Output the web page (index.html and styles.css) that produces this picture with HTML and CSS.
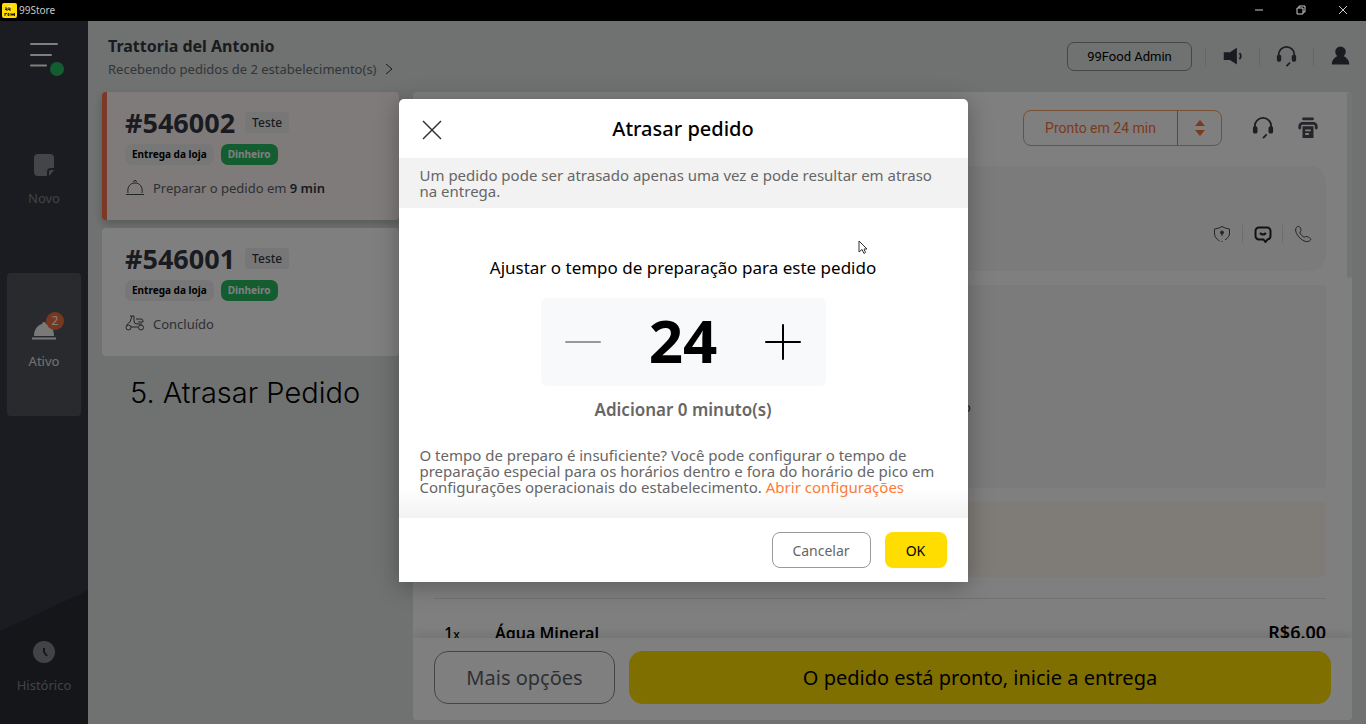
FILE: index.html
```html
<!DOCTYPE html>
<html lang="pt-BR">
  <head>
    <meta charset="UTF-8" />
    <meta name="viewport" content="width=device-width, initial-scale=1.0" />
    <title>99Store</title>
    <link rel="stylesheet" href="styles.css" />
  </head>
  <body>
    <header class="titlebar">
      <svg class="app-logo" viewBox="0 0 15 15">
        <rect width="15" height="15" rx="2" fill="#fd0" />
        <path d="M3 5h2v3M6 5h2v3M3 6.500h2M6 6.500h2M3 10v3M3 10.500h2M6 10.500h1v2H6zM9 10v3M9 11.500h4M11 10v3M12.500 10v3" fill="none" stroke="#222" stroke-width="1" />
        <path d="M6 3.500q3 1 4-1" fill="none" stroke="#fff3a0" />
      </svg>
      <span class="app-name">99Store</span>
      <button class="win-btn" aria-label="Minimizar">
        <svg viewBox="0 0 10 10"><path d="M1 5h8" /></svg>
      </button>
      <button class="win-btn" aria-label="Restaurar">
        <svg viewBox="0 0 10 10"><path d="M1 3h6v6H1zM3 3V1h6v6H7" /></svg>
      </button>
      <button class="win-btn" aria-label="Fechar">
        <svg viewBox="0 0 10 10"><path d="M1 1l8 8M9 1L1 9" /></svg>
      </button>
    </header>

    <div class="app">
      <nav class="sidebar">
        <button class="menu-btn" aria-label="Menu">
          <svg viewBox="0 0 36 36">
            <path d="M1 3h26M1 14h20M1 24.500h15" stroke="#fff" stroke-width="2" stroke-linecap="round" />
            <circle cx="27" cy="28" r="7" fill="#26bb63" />
          </svg>
        </button>
        <a href="#" class="nav-item">
          <svg class="nav-icon" viewBox="0 0 32 32">
            <path d="M10 5h12a4 4 0 0 1 4 4v10h-3a4 4 0 0 0-4 4v4h-9a4 4 0 0 1-4-4V9a4 4 0 0 1 4-4z" fill="#888b91" />
            <path d="M26 21l-5 6v-4a2 2 0 0 1 2-2z" fill="#888b91" />
          </svg>
          <span>Novo</span>
        </a>
        <a href="#" class="nav-item active">
          <svg class="nav-icon" viewBox="0 0 32 32">
            <path d="M6 24c0-7 4-11 8-12a2 2 0 0 1 4 0c5 1 8 5 8 12z" fill="#f2f2f2" />
            <path d="M4 26.500h24" stroke="#f2f2f2" stroke-width="2" />
          </svg>
          <span class="nav-badge">2</span>
          <span>Ativo</span>
        </a>
        <a href="#" class="nav-item last">
          <svg class="nav-icon" viewBox="0 0 32 32">
            <circle cx="16" cy="16" r="11" fill="#84868b" />
            <path d="M16 12v4l3 4" fill="none" stroke="#2b2e34" stroke-width="2" />
          </svg>
          <span>Histórico</span>
        </a>
      </nav>

      <main class="main">
        <header class="topbar">
          <div class="store">
            <h1>Trattoria del Antonio</h1>
            <a href="#">
              Recebendo pedidos de 2 estabelecimento(s)
              <svg viewBox="0 0 8 14"><path d="M1 2l6 5-6 5" /></svg>
            </a>
          </div>
          <button class="admin-btn">99Food Admin</button>
          <button class="icon-btn" aria-label="Avisos">
            <svg viewBox="0 0 24 24">
              <path d="M2 7h7l8-5v19l-8-5H2z" fill="#333740" />
              <path d="M20 8q3 3.500 0 7" fill="none" stroke="#333740" stroke-width="2" />
            </svg>
          </button>
          <button class="icon-btn" aria-label="Suporte">
            <svg viewBox="0 0 24 24"><use href="#headset" /></svg>
          </button>
          <button class="icon-btn" aria-label="Conta">
            <svg viewBox="0 0 24 24">
              <circle cx="12" cy="6.500" r="6" fill="#333740" />
              <path d="M2 21c0-5 3-8 7-10h6c4 2 7 5 7 10z" fill="#333740" />
            </svg>
          </button>
        </header>

        <div class="content">
          <section class="orders">
            <article class="order selected">
              <div class="order-head">
                <h2>#546002</h2>
                <span class="tag">Teste</span>
              </div>
              <div class="chips">
                <span class="chip">Entrega da loja</span>
                <span class="chip paid">Dinheiro</span>
              </div>
              <p class="status">
                <svg viewBox="0 0 20 20"><path d="M1 16.500h18M3 15c-1-6 2-10 7-10s8 4 7 10M8.500 4a1.500 1.500 0 1 1 3 0" /></svg>
                <span>Preparar o pedido em <b>9 min</b></span>
              </p>
            </article>
            <article class="order">
              <div class="order-head">
                <h2>#546001</h2>
                <span class="tag">Teste</span>
              </div>
              <div class="chips">
                <span class="chip">Entrega da loja</span>
                <span class="chip paid">Dinheiro</span>
              </div>
              <p class="status">
                <svg viewBox="0 0 20 20">
                  <path d="M5 2h4v5q0 3 3 3h5M7 2L5 8C3 9 2 10 2 12M11 5h5a2 2 0 0 1 2 2v1h-5M6 13h7" />
                  <circle cx="3.500" cy="13.500" r="2.500" />
                  <circle cx="16" cy="13.500" r="2.500" />
                </svg>
                <span>Concluído</span>
              </p>
            </article>
            <p class="caption">5. Atrasar Pedido</p>
          </section>

          <section class="detail">
            <div class="detail-scroll">
              <div class="toolbar">
                <button class="ready-btn">
                  <span class="ready-label">Pronto em 24 min</span>
                  <span class="ready-arrows">
                    <svg viewBox="0 0 10 18"><path d="M5 1l5 6H0zM5 17l5-6H0z" /></svg>
                  </span>
                </button>
                <button class="tool-btn" aria-label="Suporte">
                  <svg viewBox="0 0 24 24"><use href="#headset" /></svg>
                </button>
                <button class="tool-btn" aria-label="Imprimir">
                  <svg viewBox="0 0 24 24">
                    <path d="M7 2h10M3 12v-2a3 3 0 0 1 3-3h12a3 3 0 0 1 3 3v2" fill="none" stroke="#484c54" stroke-width="3" stroke-linecap="round" />
                    <path d="M6 10h12v13H6z" fill="#484c54" />
                    <path d="M9 14.500h6M9 18.500h4" stroke="#fff" stroke-width="2" />
                  </svg>
                </button>
              </div>
              <div class="box customer">
                <button class="contact-btn" aria-label="Segurança">
                  <svg viewBox="0 0 18 18">
                    <path d="M12 15c3-2 4.500-4 4.500-7V4Q12 3.500 9 1.500 6 3.500 1.500 4v4c0 4 2 6 5 8M8.500 16.500h1" />
                    <circle cx="9" cy="7.500" r="1.500" fill="#44484f" />
                    <path d="M9 8v3" />
                  </svg>
                </button>
                <button class="contact-btn chat" aria-label="Mensagem">
                  <svg viewBox="0 0 18 18"><path d="M5 2.500h8a3.500 3.500 0 0 1 3.500 3.500v5a3.500 3.500 0 0 1-3 3.500L11.500 17l-2-2.500H5A3.500 3.500 0 0 1 1.500 11V6A3.500 3.500 0 0 1 5 2.500zM6 8q3 3 6 0" /></svg>
                </button>
                <button class="contact-btn" aria-label="Telefone">
                  <svg viewBox="0 0 18 18"><path d="M3.500 1.500C6 .500 7 4 7 5.500c0 1-1.500 1-1 2.500 1 2 2 3 4 4 1.500.5 1.500-1 3-.5 2 1 4.500 2 3.500 3.500-3 4-10 0-13-5C1 6.500 1 3 3.500 1.500z" /></svg>
                </button>
              </div>
              <div class="box map">o</div>
              <div class="box notice"></div>
              <div class="item">
                <span class="qty">1<small>x</small></span>
                <span class="item-name">Água Mineral</span>
                <span class="item-price">R$6.00</span>
              </div>
              <div class="scroll-thumb"></div>
            </div>
            <footer class="detail-footer">
              <button class="more-btn">Mais opções</button>
              <button class="done-btn">O pedido está pronto, inicie a entrega</button>
            </footer>
          </section>
        </div>
      </main>

      <div class="overlay">
        <div class="modal" role="dialog" aria-labelledby="modal-title">
          <header class="modal-head">
            <button class="close-btn" aria-label="Fechar">
              <svg viewBox="0 0 20 20"><path d="M1 1l18 18M19 1L1 19" /></svg>
            </button>
            <h2 id="modal-title">Atrasar pedido</h2>
          </header>
          <p class="modal-note">Um pedido pode ser atrasado apenas uma vez e pode resultar em atraso na entrega.</p>
          <div class="modal-body">
            <p class="prompt">Ajustar o tempo de preparação para este pedido</p>
            <div class="stepper">
              <button class="step-btn minus" aria-label="Diminuir">
                <svg viewBox="0 0 36 36"><path d="M1 18h34" /></svg>
              </button>
              <output class="step-value">24</output>
              <button class="step-btn" aria-label="Aumentar">
                <svg viewBox="0 0 36 36"><path d="M1 18h34M18 1v34" /></svg>
              </button>
            </div>
            <p class="added">Adicionar 0 minuto(s)</p>
            <p class="hint">
              O tempo de preparo é insuficiente? Você pode configurar o tempo de preparação especial para os horários dentro e fora do horário de pico em Configurações operacionais do estabelecimento.
              <a href="#">Abrir configurações</a>
            </p>
          </div>
          <footer class="modal-foot">
            <button class="cancel-btn">Cancelar</button>
            <button class="ok-btn">OK</button>
          </footer>
          <svg class="pointer" viewBox="0 0 10 15">
            <path d="M1 1v11l3-2.500 2 4 1.500-1-1.500-3.500h3z" />
          </svg>
        </div>
      </div>
    </div>

    <svg width="0" height="0" class="defs">
      <symbol id="headset" viewBox="0 0 24 24">
        <path d="M3 12v-2a9 9 0 0 1 18 0v2M16 19l-4 4" fill="none" stroke="#383c44" stroke-width="2" />
        <rect x="1" y="10" width="5" height="8" rx="2" fill="#383c44" />
        <rect x="18" y="10" width="5" height="8" rx="2" fill="#383c44" />
      </symbol>
    </svg>
  </body>
</html>
```
FILE: styles.css
```css
* {
  box-sizing: border-box;
}

body {
  margin: 0;
  height: 100vh;
  display: flex;
  flex-direction: column;
  overflow: hidden;
  font-family: "Noto Sans", "Open Sans", sans-serif;
  color: #333740;
  background: #000;
}

h1,
h2,
p {
  margin: 0;
}

button {
  font-family: inherit;
  padding: 0;
  border: none;
  background: none;
  cursor: pointer;
}

a {
  text-decoration: none;
}

svg {
  display: block;
}

.defs {
  position: absolute;
}

/* window bar */
.titlebar {
  display: flex;
  align-items: center;
  height: 21px;
  flex-shrink: 0;
  padding: 0 2px 1px;
}

.app-logo {
  width: 15px;
  height: 15px;
}

.app-name {
  margin-left: 2px;
  margin-right: auto;
  font-size: 10px;
  color: #c8c8c8;
}

.win-btn {
  width: 42px;
  height: 20px;
  display: flex;
  align-items: center;
  justify-content: center;
}

.win-btn svg {
  width: 10px;
  height: 10px;
  fill: none;
  stroke: #ccc;
}

.app {
  position: relative;
  flex: 1;
  min-height: 0;
  display: flex;
  background: #dfe4e1;
}

/* sidebar */
.sidebar {
  width: 88px;
  flex-shrink: 0;
  display: flex;
  flex-direction: column;
  align-items: center;
  padding-top: 20px;
  background: linear-gradient(155deg, #353942 82%, #292c33 82%);
}

.menu-btn svg {
  width: 36px;
  height: 36px;
}

.menu-btn {
  margin-bottom: 33px;
  margin-left: 7px;
}

.nav-item {
  position: relative;
  width: 74px;
  height: 143px;
  margin-bottom: 20px;
  padding-bottom: 7px;
  display: flex;
  flex-direction: column;
  align-items: center;
  justify-content: center;
  gap: 8px;
  border-radius: 4px;
  font-size: 13px;
  line-height: 18px;
  color: #84868b;
}

.nav-item.active {
  background: #53555c;
  color: #e4e4e4;
}

.nav-item.last {
  height: auto;
  margin-top: auto;
  margin-bottom: 23px;
}

.nav-icon {
  width: 32px;
  height: 32px;
}

.nav-badge {
  position: absolute;
  top: 39px;
  right: 17px;
  width: 18px;
  height: 18px;
  border-radius: 50%;
  background: #f0713f;
  color: #fff;
  font-size: 12px;
  text-align: center;
}

/* top bar */
.main {
  flex: 1;
  min-width: 0;
  display: flex;
  flex-direction: column;
}

.topbar {
  display: flex;
  align-items: center;
  height: 71px;
  flex-shrink: 0;
  padding-left: 20px;
}

.store {
  margin-right: auto;
}

.store h1 {
  font-size: 16px;
  line-height: 24px;
}

.store a {
  display: flex;
  align-items: center;
  gap: 8px;
  font-size: 13px;
  line-height: 22px;
  color: #666a71;
}

.store a svg {
  width: 8px;
  height: 14px;
  fill: none;
  stroke: #333740;
}

.admin-btn {
  width: 125px;
  height: 29px;
  margin-right: 13px;
  border: 1px solid #8a8d8b;
  border-radius: 7px;
  font-family: Roboto, sans-serif;
  font-size: 13px;
  color: #000;
}

.icon-btn {
  width: 54px;
  height: 18px;
  display: flex;
  align-items: center;
  justify-content: center;
  border-left: 1px solid #cacecb;
}

.icon-btn:last-child {
  width: 53px;
}

.icon-btn svg {
  width: 21px;
  height: 21px;
}

/* order list */
.content {
  flex: 1;
  min-height: 0;
  display: flex;
  gap: 14px;
  padding: 0 14px 4px;
}

.orders {
  width: 297px;
  flex-shrink: 0;
}

.order {
  height: 128px;
  margin-bottom: 8px;
  padding: 16px 23px;
  border-radius: 4px;
  background: #fff;
}

.order.selected {
  padding-left: 18px;
  border-left: 5px solid #f8734a;
  background: #fff6f4;
  box-shadow: 0 4px 8px rgba(0, 0, 0, 0.2);
}

.order-head {
  display: flex;
  align-items: center;
  gap: 10px;
}

.order h2 {
  font-size: 27px;
  line-height: 29px;
}

.tag {
  padding: 0 7px;
  border-radius: 3px;
  background: #eeefef;
  font-size: 12px;
  line-height: 21px;
  font-weight: 500;
}

.chips {
  display: flex;
  gap: 7px;
  margin-top: 7px;
}

.chip {
  padding: 0 7px;
  border-radius: 7px;
  background: #eeefef;
  font-size: 10px;
  line-height: 21px;
  font-weight: 700;
  color: #000;
}

.chip.paid {
  background: #26bb63;
  color: #fff;
}

.status {
  display: flex;
  align-items: center;
  gap: 8px;
  margin-top: 13px;
  font-size: 13px;
  line-height: 20px;
  color: #5c6068;
}

.status svg {
  width: 20px;
  height: 20px;
  fill: none;
  stroke: #44484f;
}

.status b {
  font-weight: 600;
  color: #333740;
}

.caption {
  margin: 18px 0 0 28px;
  font-family: Inter, sans-serif;
  font-size: 29px;
  line-height: 38px;
  font-weight: 300;
  color: #000;
}

/* order detail */
.detail {
  flex: 1;
  min-width: 0;
  display: flex;
  flex-direction: column;
  border-radius: 4px;
  background: #fff;
  overflow: hidden;
}

.detail-scroll {
  position: relative;
  flex: 1;
  min-height: 0;
  padding: 18px 26px 0 21px;
  overflow: hidden;
}

.toolbar {
  display: flex;
  align-items: center;
  justify-content: flex-end;
  gap: 23px;
  padding-right: 7px;
  margin-bottom: 20px;
}

.ready-btn {
  display: flex;
  height: 36px;
  margin-right: 7px;
  border: 1px solid #f0a060;
  border-radius: 8px;
  color: #fa7337;
  font-family: Roboto, sans-serif;
  font-size: 14px;
  line-height: 34px;
}

.ready-label {
  width: 153px;
}

.ready-arrows {
  width: 44px;
  height: 34px;
  display: flex;
  align-items: center;
  justify-content: center;
  border-left: 1px solid #fa7337;
}

.ready-arrows svg {
  width: 10px;
  height: 18px;
  fill: #fa7337;
}

.tool-btn svg {
  width: 22px;
  height: 22px;
}

.box {
  margin-bottom: 14px;
  border-radius: 3px;
  background: #f7f7f7;
}

.customer {
  height: 105px;
  display: flex;
  align-items: flex-end;
  justify-content: flex-end;
  padding: 0 4px 28px;
  border-radius: 16px;
}

.contact-btn {
  width: 40px;
  height: 18px;
  display: flex;
  align-items: center;
  justify-content: center;
}

.contact-btn + .contact-btn {
  border-left: 1px solid #dcdcdc;
}

.contact-btn svg {
  width: 18px;
  height: 18px;
  fill: none;
  stroke: #44484f;
  stroke-width: 1;
}

.contact-btn.chat svg {
  stroke: #222;
  stroke-width: 2;
}

.map {
  height: 203px;
  padding: 112px 0 0 529px;
  font-size: 13px;
  line-height: 20px;
}

.notice {
  height: 75px;
  margin-bottom: 21px;
  background: #fff7ef;
}

.item {
  display: flex;
  align-items: baseline;
  padding-top: 21px;
  border-top: 1px solid #e2e2e2;
  font-size: 16px;
  line-height: 24px;
  font-weight: 600;
  color: #000;
}

.qty {
  width: 61px;
  padding-left: 10px;
  font-weight: 500;
}

.qty small {
  font-size: 12px;
}

.item-price {
  margin-left: auto;
  font-size: 18px;
}

.scroll-thumb {
  position: absolute;
  top: 0;
  right: 0;
  width: 5px;
  height: 186px;
  border-radius: 3px;
  background: #e6e9e7;
}

.detail-footer {
  display: flex;
  gap: 14px;
  padding: 13px 21px 16px;
  background: #fff;
  box-shadow: 0 -4px 10px rgba(0, 0, 0, 0.1);
  z-index: 1;
}

.more-btn,
.done-btn {
  height: 53px;
  border-radius: 14px;
  font-size: 20px;
}

.more-btn {
  width: 181px;
  border: 1px solid #8a8a8a;
  color: #5c6068;
}

.done-btn {
  flex: 1;
  background: #fd0;
  color: #000;
}

/* modal */
.overlay {
  position: absolute;
  inset: 0;
  z-index: 10;
  display: flex;
  align-items: flex-start;
  justify-content: center;
  padding-top: 78px;
  background: rgba(0, 0, 0, 0.5);
}

.modal {
  position: relative;
  width: 569px;
  border-radius: 5px 5px 0 0;
  background: #fff;
  box-shadow: 0 4px 24px rgba(0, 0, 0, 0.3);
}

.modal-head {
  position: relative;
  height: 59px;
  display: flex;
  align-items: center;
  justify-content: center;
}

.modal-head h2 {
  font-size: 20px;
  line-height: 28px;
  font-weight: 500;
  color: #000;
}

.close-btn {
  position: absolute;
  left: 23px;
  top: 21px;
}

.close-btn svg {
  width: 20px;
  height: 20px;
  fill: none;
  stroke: #333;
  stroke-width: 1.5;
}

.modal-note {
  padding: 9px 21px;
  background: #f2f2f2;
  font-size: 15px;
  line-height: 16px;
  color: #666;
}

.modal-body {
  display: flex;
  flex-direction: column;
  align-items: center;
  padding: 48px 21px 23px;
  background: linear-gradient(#fff 90%, #f2f2f2);
}

.prompt {
  font-size: 17px;
  line-height: 24px;
  color: #000;
}

.stepper {
  width: 285px;
  height: 88px;
  margin-top: 18px;
  padding: 0 24px;
  display: flex;
  align-items: center;
  justify-content: space-between;
  border-radius: 6px;
  background: #f8f9fb;
}

.step-btn svg {
  width: 36px;
  height: 36px;
  fill: none;
  stroke: #000;
  stroke-width: 2;
  stroke-linecap: round;
}

.step-btn.minus svg {
  stroke: #999;
}

.step-value {
  font-size: 60px;
  line-height: 84px;
  padding-bottom: 4px;
  font-weight: 700;
  color: #000;
}

.added {
  margin-top: 12px;
  font-size: 17px;
  line-height: 24px;
  font-weight: 600;
  color: #666;
}

.hint {
  margin-top: 25px;
  font-size: 15px;
  line-height: 16px;
  color: #666;
}

.hint a {
  color: #ff7a38;
}

.modal-foot {
  display: flex;
  justify-content: flex-end;
  gap: 14px;
  padding: 14px 21px;
}

.cancel-btn,
.ok-btn {
  height: 36px;
  border-radius: 8px;
  font-size: 14px;
}

.cancel-btn {
  width: 99px;
  border: 1px solid #999;
  color: #666;
}

.ok-btn {
  width: 62px;
  background: #fd0;
  color: #000;
}

.pointer {
  position: absolute;
  left: 459px;
  top: 141px;
  width: 10px;
  height: 15px;
  fill: #fff;
  stroke: #333;
}
```
